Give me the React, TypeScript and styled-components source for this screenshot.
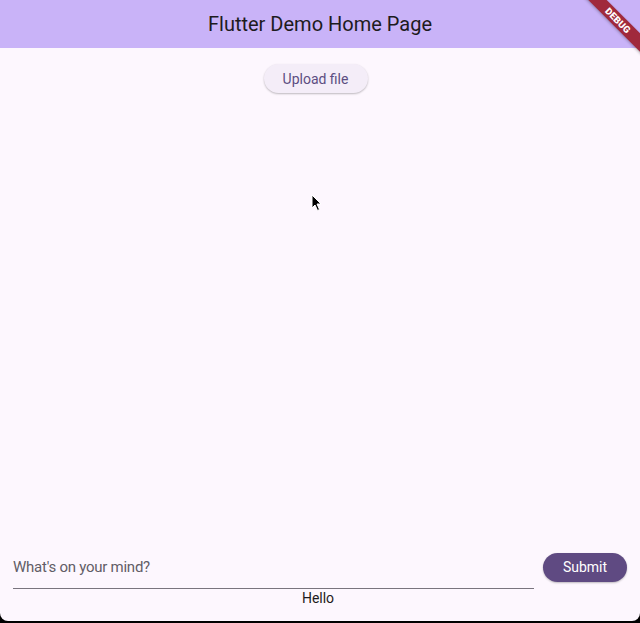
import styled, { createGlobalStyle } from "styled-components";

const GlobalStyle = createGlobalStyle`
  html, body {
    margin: 0;
    padding: 0;
    background: #000;
  }
  * {
    box-sizing: border-box;
  }
`;

const Window = styled.div`
  position: relative;
  width: 640px;
  height: 621px;
  overflow: hidden;
  background: #fdf7fe;
  border-radius: 0 0 8px 8px;
  display: flex;
  flex-direction: column;
  font-family: Roboto, "Liberation Sans", sans-serif;
`;

const AppBar = styled.header`
  height: 48px;
  flex-shrink: 0;
  background: #c9b3f8;
  display: flex;
  align-items: center;
  justify-content: center;
`;

const Title = styled.h1`
  margin: 0;
  font-size: 20px;
  font-weight: 400;
  color: #1d1b20;
  padding-bottom: 1px;
`;

const Body = styled.main`
  flex: 1;
  display: flex;
  flex-direction: column;
  align-items: center;
  padding-top: 16px;
`;

const PillButton = styled.button<{ $primary?: boolean }>`
  height: 29px;
  padding: 0 16px;
  border: none;
  border-radius: 15px;
  font-family: Roboto, "Liberation Sans", sans-serif;
  font-size: 14px;
  font-weight: 400;
  flex-shrink: 0;
  cursor: pointer;
  background: ${(p) => (p.$primary ? "#5f4a82" : "#f4edf8")};
  color: ${(p) => (p.$primary ? "#ffffff" : "#5c4e82")};
  box-shadow: 0 1px 2px rgba(0, 0, 0, 0.25);
`;

const UploadButton = styled(PillButton)`
  width: 104px;
  margin-right: 9px;
`;

const SubmitButton = styled(PillButton)`
  width: 84px;
  margin-top: 4px;
`;

const Spacer = styled.div`
  flex: 1;
`;

const Composer = styled.div`
  display: flex;
  align-items: center;
  gap: 9px;
  width: 100%;
  padding: 0 13px;
`;

const Field = styled.label`
  flex: 1;
  height: 48px;
  display: flex;
  align-items: center;
  border-bottom: 1px solid #79747e;
  padding-top: 5px;
`;

const Input = styled.input`
  width: 100%;
  border: none;
  outline: none;
  background: transparent;
  padding: 0;
  font-family: Roboto, "Liberation Sans", sans-serif;
  font-size: 15px;
  letter-spacing: -0.25px;
  color: #1d1b20;
  &::placeholder {
    color: #625d66;
  }
`;

const Output = styled.p`
  margin: 0;
  height: 32px;
  padding: 1px 4px 0 0;
  width: 100%;
  text-align: center;
  font-size: 14px;
  line-height: 16px;
  color: #1d1b20;
`;

const Banner = styled.div`
  position: absolute;
  top: 14px;
  left: 568px;
  width: 100px;
  height: 13px;
  background: #a0293c;
  color: #fff;
  transform: rotate(45deg);
  display: flex;
  align-items: center;
  justify-content: center;
  font-family: Roboto, "Liberation Sans", sans-serif;
  font-size: 9.5px;
  font-weight: 900;
  letter-spacing: 0.2px;
  box-shadow: 0 1px 3px rgba(0, 0, 0, 0.3);
`;

const Pointer = styled.svg`
  position: absolute;
  left: 311px;
  top: 194px;
  pointer-events: none;
`;

export default function App() {
  return (
    <>
      <GlobalStyle />
      <Window>
        <AppBar>
          <Title>Flutter Demo Home Page</Title>
        </AppBar>
        <Body>
          <UploadButton>Upload file</UploadButton>
          <Spacer />
          <Composer>
            <Field>
              <Input placeholder="What's on your mind?" />
            </Field>
            <SubmitButton $primary>Submit</SubmitButton>
          </Composer>
          <Output>Hello</Output>
        </Body>
        <Banner>DEBUG</Banner>
        <Pointer width="12" height="18" viewBox="0 0 12 18">
          <path
            d="M1 1 L1 14 L4 11 L6.5 16.5 L8.5 15.5 L6 10 L10 10 Z"
            fill="#000"
            stroke="#fff"
            strokeWidth="1"
            strokeLinejoin="round"
          />
        </Pointer>
      </Window>
    </>
  );
}
